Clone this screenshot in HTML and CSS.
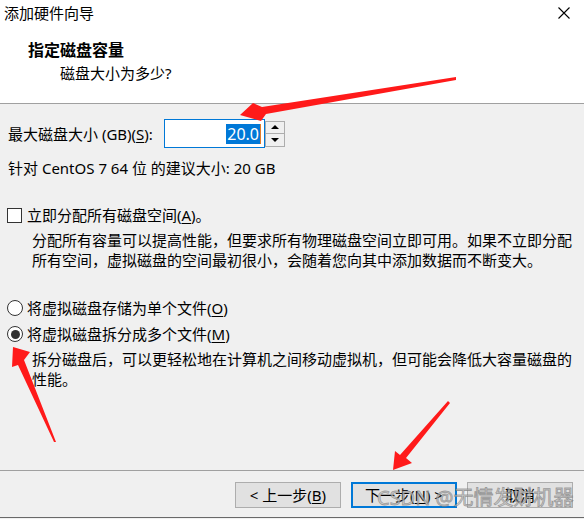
FILE: index.html
```html
<!DOCTYPE html>
<html lang="zh-CN">

<head>
    <meta charset="UTF-8">
    <title>添加硬件向导</title>
    <link rel="stylesheet" href="styles.css">
</head>

<body>
    <div class="window">
        <!-- Barra de título -->
        <div class="titlebar">
            <span class="title">添加硬件向导</span>
            <svg class="close" width="12" height="12" viewBox="0 0 12 12">
                <path d="M0.5 0.5 L11.5 11.5 M11.5 0.5 L0.5 11.5" stroke="#000" stroke-width="1.1" fill="none"/>
            </svg>
        </div>

        <div class="header">
            <div class="heading">指定磁盘容量</div>
            <div class="subheading">磁盘大小为多少?</div>
        </div>

        <div class="content">
            <div class="size-row">
                <label class="size-label">最大磁盘大小 (GB)(<u>S</u>):</label>
                <div class="input-box"><span class="selected">20.0</span><span class="caret"></span></div>
                <div class="spinner">
                    <div class="spin-btn"><span class="tri-up"></span></div>
                    <div class="spin-btn"><span class="tri-down"></span></div>
                </div>
            </div>
            <div class="hint">针对 CentOS 7 64 位 的建议大小: 20 GB</div>

            <div class="check-row">
                <span class="checkbox"></span>
                <span>立即分配所有磁盘空间(<u>A</u>)。</span>
            </div>
            <p class="note">分配所有容量可以提高性能，但要求所有物理磁盘空间立即可用。如果不立即分配所有空间，虚拟磁盘的空间最初很小，会随着您向其中添加数据而不断变大。</p>

            <div class="radio-row first">
                <span class="radio"></span>
                <span>将虚拟磁盘存储为单个文件(<u>O</u>)</span>
            </div>
            <div class="radio-row">
                <span class="radio checked"></span>
                <span>将虚拟磁盘拆分成多个文件(<u>M</u>)</span>
            </div>
            <p class="note">拆分磁盘后，可以更轻松地在计算机之间移动虚拟机，但可能会降低大容量磁盘的性能。</p>
        </div>

        <div class="footer">
            <button class="btn">&lt; 上一步(<u>B</u>)</button>
            <button class="btn primary">下一步(<u>N</u>) &gt;</button>
            <button class="btn">取消</button>
        </div>

        <!-- Setas vermelhas desenhadas por cima da captura -->
        <svg class="arrows" width="584" height="519" viewBox="0 0 584 519">
            <polygon fill="#ff1a1a" points="456,77 456,80 266,114 261,121 240,115 253,103 262,107" />
            <polygon fill="#ff1a1a" points="13,347 30,352 24,360 56,442 54,442 18,365 12,367" />
            <polygon fill="#ff1a1a" points="448,401 450,403 406,458 412,463 393,470 395,451 400,455" />
        </svg>

        <div class="watermark">CSDN @无情发财机器</div>
    </div>
</body>

</html>
```

FILE: styles.css
```css
body {
    margin: 0;
    font-family: "Noto Sans", "Noto Sans CJK SC", sans-serif;
    font-size: 15px;
    color: #000;
}

.window {
    width: 584px;
    height: 519px;
    background-color: #f0f0f0;
    position: relative;
    overflow: hidden;
}

u {
    text-decoration: underline;
    text-underline-offset: 2px;
}

.titlebar {
    height: 26px;
    background-color: #fff;
    display: flex;
    justify-content: space-between;
    align-items: center;
    padding: 0 14px 0 4px;
}

.title {
    line-height: 26px;
    font-size: 15px;
}

.close {
    display: block;
}

.header {
    height: 78px;
    background-color: #fff;
    border-bottom: 1px solid #a0a0a0;
    box-sizing: border-box;
    padding-top: 13px;
}

.heading {
    padding-left: 28px;
    font-weight: bold;
    font-size: 16px;
    line-height: 22px;
}

.subheading {
    padding-left: 60px;
    line-height: 22px;
    margin-top: 1px;
}

.content {
    height: 366px;
    box-sizing: border-box;
    padding-top: 15px;
}

.size-row {
    display: flex;
    align-items: center;
    padding-left: 8px;
}

.size-label {
    width: 156px;
    line-height: 20px;
}

.input-box {
    width: 101px;
    height: 29px;
    box-sizing: border-box;
    border: 1px solid #0078d7;
    background-color: #fff;
    display: flex;
    justify-content: flex-end;
    align-items: center;
    padding-right: 3px;
}

.selected {
    background-color: #0078d7;
    color: #fff;
    font-size: 16px;
    line-height: 20px;
    padding: 0 1px;
}

.caret {
    width: 1px;
    height: 20px;
    background-color: #e07b2a;
}

.spinner {
    width: 20px;
    height: 26px;
    display: flex;
    flex-direction: column;
}

.spin-btn {
    flex: 1;
    border: 1px solid #adadad;
    background-color: #f0f0f0;
    display: flex;
    justify-content: center;
    align-items: center;
}

.spin-btn + .spin-btn {
    border-top: none;
}

.tri-up {
    border-left: 4px solid transparent;
    border-right: 4px solid transparent;
    border-bottom: 4px solid #000;
}

.tri-down {
    border-left: 4px solid transparent;
    border-right: 4px solid transparent;
    border-top: 4px solid #000;
}

.hint {
    padding-left: 8px;
    margin-top: 10px;
    line-height: 20px;
}

.check-row,
.radio-row {
    display: flex;
    align-items: center;
    line-height: 20px;
}

.check-row {
    margin-top: 27px;
    padding-left: 7px;
}

.checkbox {
    width: 13px;
    height: 13px;
    border: 1px solid #333;
    background-color: #fff;
    margin-right: 5px;
}

.note {
    margin: 5px 0 0 0;
    padding: 0 8px 0 32px;
    line-height: 20px;
}

.radio-row {
    margin-top: 6px;
    padding-left: 7px;
}

.radio-row.first {
    margin-top: 28px;
}

.radio {
    width: 14px;
    height: 14px;
    border: 1px solid #333;
    border-radius: 50%;
    background-color: #fff;
    margin-right: 4px;
    display: flex;
    justify-content: center;
    align-items: center;
}

.radio.checked::after {
    content: "";
    width: 9px;
    height: 9px;
    border-radius: 50%;
    background-color: #333;
}

.footer {
    height: 48px;
    box-sizing: border-box;
    border-top: 1px solid #a0a0a0;
    border-bottom: 1px solid #696969;
    display: flex;
    justify-content: flex-end;
    gap: 10px;
    padding: 11px 11px 0 0;
}

.btn {
    width: 106px;
    height: 26px;
    box-sizing: border-box;
    border: 1px solid #adadad;
    background-color: #e1e1e1;
    font-family: "Noto Sans", "Noto Sans CJK SC", sans-serif;
    font-size: 15px;
    line-height: 20px;
    padding: 0;
    color: #000;
}

.btn.primary {
    border: 2px solid #0078d7;
}

.arrows {
    position: absolute;
    top: 0;
    left: 0;
}

.watermark {
    position: absolute;
    left: 377px;
    top: 485px;
    font-size: 20px;
    line-height: 26px;
    color: rgba(200, 200, 200, 0.7);
    -webkit-text-stroke: 0.8px rgba(110, 110, 110, 0.6);
}
```
